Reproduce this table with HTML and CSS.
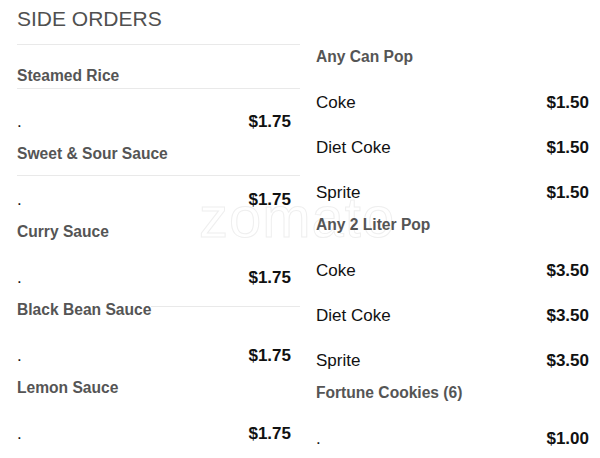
FILE: index.html
```html
<!DOCTYPE html>
<html lang="en">
<head>
  <meta charset="UTF-8">
  <meta name="viewport" content="width=device-width, initial-scale=1">
  <title>Side Orders</title>
  <link rel="stylesheet" href="styles.css">
</head>
<body>
  <div class="menu">
    <div class="watermark">zomato</div>

    <section class="col">
      <h1 class="section-title">SIDE ORDERS</h1>

      <div class="item">
        <h3 class="item-name rule-tight">Steamed Rice</h3>
        <div class="row"><span>.</span><span class="price">$1.75</span></div>
      </div>
      <div class="item">
        <h3 class="item-name rule-loose">Sweet &amp; Sour Sauce</h3>
        <div class="row"><span>.</span><span class="price">$1.75</span></div>
      </div>
      <div class="item">
        <h3 class="item-name">Curry Sauce</h3>
        <div class="row"><span>.</span><span class="price">$1.75</span></div>
      </div>
      <div class="item">
        <h3 class="item-name rule-through"><span>Black Bean Sauce</span></h3>
        <div class="row"><span>.</span><span class="price">$1.75</span></div>
      </div>
      <div class="item">
        <h3 class="item-name">Lemon Sauce</h3>
        <div class="row"><span>.</span><span class="price">$1.75</span></div>
      </div>
    </section>

    <section class="col col-right">
      <div class="item">
        <h3 class="item-name">Any Can Pop</h3>
        <div class="row"><span>Coke</span><span class="price">$1.50</span></div>
        <div class="row"><span>Diet Coke</span><span class="price">$1.50</span></div>
        <div class="row"><span>Sprite</span><span class="price">$1.50</span></div>
      </div>
      <div class="item">
        <h3 class="item-name">Any 2 Liter Pop</h3>
        <div class="row"><span>Coke</span><span class="price">$3.50</span></div>
        <div class="row"><span>Diet Coke</span><span class="price">$3.50</span></div>
        <div class="row"><span>Sprite</span><span class="price">$3.50</span></div>
      </div>
      <div class="item">
        <h3 class="item-name">Fortune Cookies (6)</h3>
        <div class="row"><span>.</span><span class="price">$1.00</span></div>
      </div>
    </section>
  </div>
</body>
</html>
```

FILE: styles.css
```css
/* Base styling */
body {
  margin: 0;
  background: #fff;
  font-family: "Liberation Sans", Arial, sans-serif;
  color: #111;
}
.menu {
  position: relative;
  display: grid;
  grid-template-columns: 283px 283px;
  column-gap: 16px;
  padding-left: 17px;
  height: 458px;
  overflow: hidden;
}
.col {
  position: relative;
}
.section-title {
  margin: 7px 0 21px;
  padding-bottom: 13px;
  border-bottom: 1px solid #e9e9e9;
  font-size: 21px;
  line-height: 24px;
  font-weight: normal;
  color: #505050;
}
.col-right {
  padding-top: 47px;
}
.item-name {
  margin: 0 0 14px;
  font-size: 15.6px;
  line-height: 19px;
  font-weight: bold;
  color: #555;
}
/* odd divider lines from the scanned menu */
.item-name.rule-tight {
  padding-bottom: 3px;
  border-bottom: 1px solid #e9e9e9;
  margin-bottom: 10px;
}
.item-name.rule-loose {
  padding-bottom: 12px;
  border-bottom: 1px solid #e9e9e9;
  margin-bottom: 1px;
}
.item-name.rule-through {
  background: linear-gradient(#e9e9e9, #e9e9e9) no-repeat 0 6px / 100% 1px;
}
.item-name.rule-through span {
  background: #fff;
}
.row {
  display: flex;
  justify-content: space-between;
  align-items: center;
  height: 45px;
  padding-right: 9px;
  font-size: 17px;
  color: #111;
}
.col-right .row {
  padding-right: 10px;
}
.price {
  font-weight: bold;
}
/* faint site watermark behind the menu */
.watermark {
  position: absolute;
  left: 199px;
  top: 188px;
  font-size: 58px;
  line-height: 1;
  letter-spacing: 1px;
  color: transparent;
  -webkit-text-stroke: 1px #efefef;
  pointer-events: none;
}
```
